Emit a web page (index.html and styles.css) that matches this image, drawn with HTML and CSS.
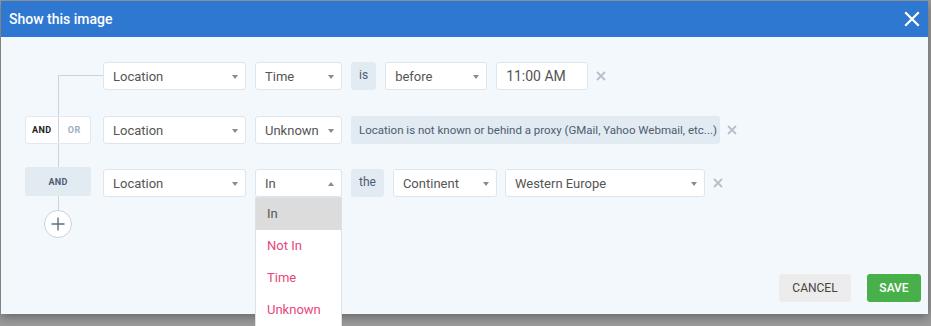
FILE: index.html
```html
<!DOCTYPE html>
<html lang="en">
<head>
    <meta charset="UTF-8">
    <title>Show this image</title>
    <link rel="stylesheet" href="styles.css">
</head>
<body>
    <div class="modal">
        <div class="modal-header">
            <span class="modal-title">Show this image</span>
            <button class="close" aria-label="Close">
                <svg width="16" height="16" viewBox="0 0 16 16"><path d="M2 2 L14 14 M14 2 L2 14" stroke="#fff" stroke-width="2.2" stroke-linecap="square"/></svg>
            </button>
        </div>

        <div class="modal-body">
            <div class="conditions">
                <div class="trunk"></div>

                <div class="row">
                    <div class="logic"><div class="elbow"></div></div>
                    <div class="select w-field">Location <span class="caret"></span></div>
                    <div class="select w-op">Time <span class="caret"></span></div>
                    <div class="word">is</div>
                    <div class="select w-before">before <span class="caret"></span></div>
                    <div class="input">11:00 AM</div>
                    <span class="remove"><svg width="10" height="10" viewBox="0 0 10 10"><path d="M1 1 L9 9 M9 1 L1 9" stroke="#b5c0cb" stroke-width="1.8"/></svg></span>
                </div>

                <div class="row">
                    <div class="logic">
                        <div class="toggle">
                            <span class="on">AND</span><span class="off">OR</span>
                        </div>
                    </div>
                    <div class="select w-field">Location <span class="caret"></span></div>
                    <div class="select w-op">Unknown <span class="caret"></span></div>
                    <div class="word info">Location is not known or behind a proxy (GMail, Yahoo Webmail, etc...)</div>
                    <span class="remove"><svg width="10" height="10" viewBox="0 0 10 10"><path d="M1 1 L9 9 M9 1 L1 9" stroke="#b5c0cb" stroke-width="1.8"/></svg></span>
                </div>

                <div class="row">
                    <div class="logic"><div class="and-block">AND</div></div>
                    <div class="select w-field">Location <span class="caret"></span></div>
                    <div class="select w-op open">In <span class="caret up"></span>
                        <ul class="menu">
                            <li class="active">In</li>
                            <li>Not In</li>
                            <li>Time</li>
                            <li>Unknown</li>
                        </ul>
                    </div>
                    <div class="word">the</div>
                    <div class="select w-cont">Continent <span class="caret"></span></div>
                    <div class="select w-region">Western Europe <span class="caret"></span></div>
                    <span class="remove"><svg width="10" height="10" viewBox="0 0 10 10"><path d="M1 1 L9 9 M9 1 L1 9" stroke="#b5c0cb" stroke-width="1.8"/></svg></span>
                </div>

                <div class="add-row">
                    <button class="add">
                        <svg width="14" height="14" viewBox="0 0 14 14"><path d="M7 0.5 V13.5 M0.5 7 H13.5" stroke="#5b6f88" stroke-width="1.4"/></svg>
                    </button>
                </div>
            </div>
        </div>

        <div class="modal-footer">
            <button class="btn cancel">Cancel</button>
            <button class="btn save">Save</button>
        </div>
    </div>
</body>
</html>
```

FILE: styles.css
```css
body {
    margin: 0;
    padding: 1px 3px 0 1px;
    background-color: #9b9b9b;
    font-family: Roboto, "Liberation Sans", Arial, sans-serif;
    height: 326px;
    box-sizing: border-box;
    overflow: hidden;
}

.modal {
    height: 313px;
    background-color: #f3f8fc;
    display: flex;
    flex-direction: column;
    box-shadow: 0 3px 10px rgba(0, 0, 0, 0.35);
}

.modal-header {
    height: 36px;
    background-color: #2f78d1;
    display: flex;
    align-items: center;
    justify-content: space-between;
    padding: 0 8px 0 8px;
}

.modal-title {
    color: #fff;
    font-size: 14px;
    font-weight: 500;
}

.close {
    background: none;
    border: none;
    padding: 0;
    width: 16px;
    height: 16px;
    display: flex;
    cursor: pointer;
}

.modal-body {
    flex: 1;
    padding: 25px 0 0 24px;
}

.conditions {
    position: relative;
}

/* linha vertical que liga as condicoes */
.trunk {
    position: absolute;
    left: 33px;
    top: 13px;
    height: 135px;
    border-left: 1px solid #c8d4e0;
}

.row {
    display: flex;
    align-items: center;
    height: 28px;
    margin-bottom: 26px;
}

.row:nth-child(3) {
    margin-bottom: 25px;
}

.row:nth-child(4) {
    margin-bottom: 13px;
}

.logic {
    width: 66px;
    margin-right: 12px;
    height: 28px;
    position: relative;
}

.elbow {
    position: absolute;
    left: 33px;
    top: 13px;
    width: 45px;
    border-top: 1px solid #c8d4e0;
}

.toggle {
    position: relative;
    display: flex;
    height: 28px;
    background-color: #fff;
    border: 1px solid #e1e8ef;
    border-radius: 3px;
    box-sizing: border-box;
    font-size: 9px;
    font-weight: 700;
    letter-spacing: 0.5px;
}

.toggle span {
    flex: 1;
    display: flex;
    align-items: center;
    justify-content: center;
}

.toggle .on {
    color: #222;
}

.toggle .off {
    color: #9aaec4;
    border-left: 1px solid #c8d4e0;
}

.and-block {
    height: 29px;
    margin-top: -2px;
    background-color: #e2eaf2;
    border-radius: 3px;
    display: flex;
    align-items: center;
    justify-content: center;
    font-size: 9px;
    font-weight: 700;
    color: #4d5d70;
    letter-spacing: 0.3px;
}

.select, .input {
    position: relative;
    height: 28px;
    box-sizing: border-box;
    background-color: #fff;
    border: 1px solid #dde5ed;
    border-radius: 3px;
    padding: 0 9px;
    display: flex;
    align-items: center;
    font-size: 13px;
    color: #555;
    margin-right: 9px;
}

.caret {
    position: absolute;
    right: 7px;
    top: 12px;
    border-left: 3px solid transparent;
    border-right: 3px solid transparent;
    border-top: 4px solid #8a8a8a;
}

.caret.up {
    border-top: none;
    border-bottom: 4px solid #8a8a8a;
}

.w-field { width: 143px; }
.w-op { width: 87px; }
.w-before { width: 102px; }
.w-cont { width: 104px; margin-right: 8px; }
.w-region { width: 200px; margin-right: 8px; }

.input {
    width: 92px;
    font-size: 14px;
    margin-right: 8px;
}

.word {
    height: 28px;
    background-color: #e2eaf2;
    border-radius: 3px;
    padding: 0 8px;
    display: flex;
    align-items: center;
    font-size: 12px;
    color: #4d5d70;
    margin-right: 9px;
    padding-bottom: 3px;
    box-sizing: border-box;
}

.word.info {
    padding: 0 8px;
    margin-right: 7px;
    white-space: nowrap;
    font-size: 11.5px;
    width: 369px;
}

.remove {
    display: flex;
    align-items: center;
}

.menu {
    position: absolute;
    top: 27px;
    left: -1px;
    width: 87px;
    margin: 0;
    padding: 0;
    list-style: none;
    background-color: #fff;
    border: 1px solid #d9e1ea;
    box-sizing: border-box;
    z-index: 2;
}

.menu li {
    height: 32px;
    line-height: 32px;
    padding-left: 11px;
    color: #e8467c;
    font-size: 13px;
}

.menu li.active {
    background-color: #dcdcdc;
    color: #555;
}

.add-row {
    width: 66px;
    display: flex;
    justify-content: center;
}

.add {
    width: 28px;
    height: 28px;
    border-radius: 50%;
    background-color: #fff;
    border: 1px solid #c8d4e0;
    display: flex;
    align-items: center;
    justify-content: center;
    padding: 0;
    position: relative;
}

.modal-footer {
    display: flex;
    justify-content: flex-end;
    gap: 16px;
    padding: 0 7px 12px 0;
}

.btn {
    height: 28px;
    border: none;
    border-radius: 3px;
    font-family: Roboto, "Liberation Sans", Arial, sans-serif;
    font-size: 12px;
    text-transform: uppercase;
    cursor: pointer;
}

.cancel {
    width: 72px;
    background-color: #ececec;
    color: #444;
}

.save {
    width: 54px;
    background-color: #47b04b;
    color: #fff;
    font-weight: 500;
}
```
